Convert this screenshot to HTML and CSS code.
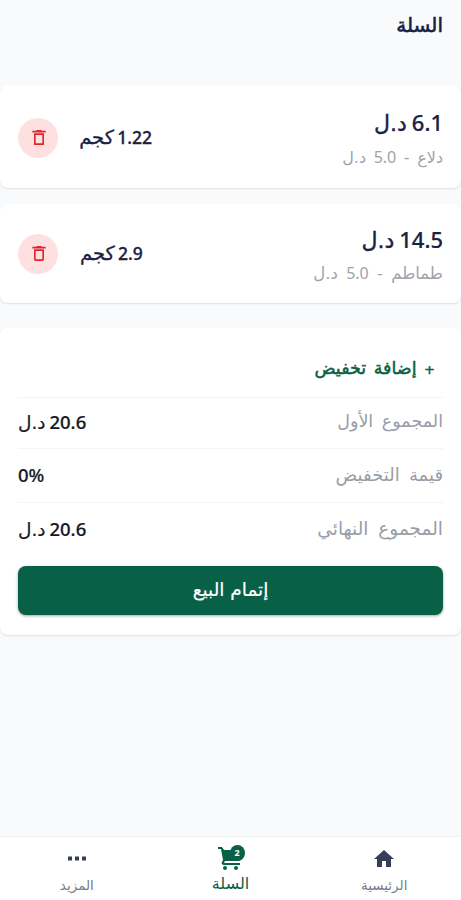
FILE: index.html
```html
<!DOCTYPE html>
<html lang="ar" dir="rtl">
<head>
<meta charset="utf-8">
<meta name="viewport" content="width=device-width">
<title>السلة</title>
<link rel="stylesheet" href="styles.css">
</head>
<body>
<header class="header"><h1 class="title">السلة</h1></header>
<main class="main">
  <section class="card item">
    <div class="info">
      <div class="price"><span class="num">6.1</span> <span class="unit">د.ل</span></div>
      <div class="desc"><span>دلاع</span> - <span class="num">5.0</span> <span>د.ل</span></div>
    </div>
    <div class="qty"><span class="num">1.22</span> <span class="unit">كجم</span></div>
    <button class="delete" aria-label="حذف"><svg viewBox="0 0 24 24"><path d="M6 21h12V7H6v14zM8 9h8v10H8V9zM15.5 4l-1-1h-5l-1 1H4v2h16V4z"/></svg></button>
  </section>
  <section class="card item second">
    <div class="info">
      <div class="price"><span class="num">14.5</span> <span class="unit">د.ل</span></div>
      <div class="desc wide"><span>طماطم</span> - <span class="num">5.0</span> <span>د.ل</span></div>
    </div>
    <div class="qty"><span class="num">2.9</span> <span class="unit">كجم</span></div>
    <button class="delete" aria-label="حذف"><svg viewBox="0 0 24 24"><path d="M6 19c0 1.1.9 2 2 2h8c1.1 0 2-.9 2-2V7H6v12zM8 9h8v10H8V9zM15.5 4l-1-1h-5l-1 1H4v2h16V4z"/></svg></button>
  </section>
  <section class="card summary">
    <button class="add"><span class="plus">+</span> إضافة تخفيض</button>
    <div class="row first"><span class="label">المجموع الأول</span><span class="value"><span class="num">20.6</span> <span class="unit">د.ل</span></span></div>
    <div class="row"><span class="label mid">قيمة التخفيض</span><span class="value" dir="ltr"><span class="num">0%</span></span></div>
    <div class="row"><span class="label wide">المجموع النهائي</span><span class="value"><span class="num">20.6</span> <span class="unit">د.ل</span></span></div>
    <button class="checkout">إتمام البيع</button>
  </section>
</main>
<nav class="nav">
  <a class="tab"><svg viewBox="0 0 24 24"><path d="M10 20v-6h4v6h5v-8h3L12 3 2 12h3v8z"/></svg><span>الرئيسية</span></a>
  <a class="tab active"><span class="cart"><svg viewBox="0 0 28 26"><path d="M1 2h4l2 3h18v7l-3 4H8l-1 2h16v2H7c-2 0-3-1.500-2-3l1-2L4 4H1z"/><circle cx="8" cy="23" r="2"/><circle cx="19" cy="23" r="2"/></svg><b class="badge">2</b></span><span>السلة</span></a>
  <a class="tab"><svg viewBox="0 0 24 24"><path d="M3 9.500h4v4H3zM10 9.500h4v4h-4zM17 9.500h4v4h-4z"/></svg><span>المزيد</span></a>
</nav>
</body>
</html>
```
FILE: styles.css
```css
* { box-sizing: border-box; }
body { margin: 0; height: 900px; display: flex; flex-direction: column; background: #f9fafc; color: #1b2142; font-family: "DejaVu Sans", sans-serif; overflow: hidden; }
button { border: 0; padding: 0; font-family: inherit; }
.header { height: 85px; padding: 11px 18px; }
.title { margin: 0; font-size: 20px; line-height: 28px; font-weight: 400; -webkit-text-stroke: .6px; }
.main { flex: 1; }
.num { font-family: "Noto Sans", sans-serif; font-weight: 500; }
.card { background: #fff; border-radius: 8px; box-shadow: 0 1px 2px rgba(30, 40, 60, .13); }
.item { height: 103px; display: flex; align-items: center; padding: 5px 18px 0; }
.second { height: 99px; margin-top: 16px; padding-top: 3px; }
.info { flex: 1; }
.price { font-size: 22px; line-height: 34px; word-spacing: -2px; white-space: nowrap; -webkit-text-stroke: .4px; }
.price .num { font-size: 22px; letter-spacing: -1px; -webkit-text-stroke: .2px; }
.desc { font-size: 16px; line-height: 32px; color: #a0a3aa; word-spacing: 2.5px; white-space: nowrap; }
.desc.wide { font-size: 16.5px; line-height: 31px; word-spacing: 3px; }
.desc .num { font-size: 16px; font-weight: 400; letter-spacing: -.3px; }
.qty { width: 72px; margin-left: 22px; margin-bottom: 4px; text-align: left; font-size: 19.5px; word-spacing: -3px; white-space: nowrap; -webkit-text-stroke: .3px; }
.qty .num { font-size: 17.5px; letter-spacing: -.8px; }
.second .qty { width: 66px; }
.delete { width: 40px; height: 40px; margin-bottom: 3px; border-radius: 50%; background: #ffe0e0; display: grid; place-items: center; }
.delete svg { width: 20px; height: 21px; margin-left: 1px; fill: #dc2630; }
.summary { height: 307px; margin-top: 25px; padding: 14px 18px 0; }
.add { display: block; height: 55px; padding-bottom: 3px; margin-right: 8px; background: none; color: #0a6044; font-size: 17.5px; word-spacing: 2px; -webkit-text-stroke: .5px; }
.plus { font-size: 13px; }
.row { height: 54px; padding-bottom: 2px; display: flex; justify-content: space-between; align-items: center; border-top: 1px solid #f3f4f5; }
.row.first { height: 51px; padding-bottom: 4px; }
.label { font-size: 17.5px; color: #9a9da5; word-spacing: 3px; }
.label.mid { font-size: 18px; word-spacing: 3.5px; }
.label.wide { font-size: 18.5px; word-spacing: 4px; }
.value { font-size: 18.5px; color: #17181f; word-spacing: -2px; -webkit-text-stroke: .2px; }
.checkout { display: block; width: 100%; height: 49px; margin-top: 10px; padding-bottom: 2px; border-radius: 8px; background: #086146; color: #fff; font-size: 18.5px; -webkit-text-stroke: .2px; box-shadow: 0 1px 3px rgba(0, 30, 20, .4); }
.nav { height: 64px; display: grid; grid-template-columns: repeat(3, 1fr); background: #fff; border-top: 1px solid #eff0f2; }
.tab { display: flex; flex-direction: column; align-items: center; padding-top: 10px; font-size: 13.5px; line-height: 28px; color: #777c86; }
.tab svg { width: 24px; height: 24px; flex: none; fill: #353f58; }
.tab.active { color: #0a6044; font-size: 16px; padding-top: 8px; line-height: 26px; }
.cart { position: relative; height: 26px; display: flex; }
.cart svg, .tab.active svg { width: 28px; height: 26px; fill: #086146; }
.badge { position: absolute; top: 0; right: 0; width: 15px; height: 16px; border-radius: 50%; background: #086146; color: #fff; font: 700 9px/16px "Noto Sans", sans-serif; text-align: center; }
```
